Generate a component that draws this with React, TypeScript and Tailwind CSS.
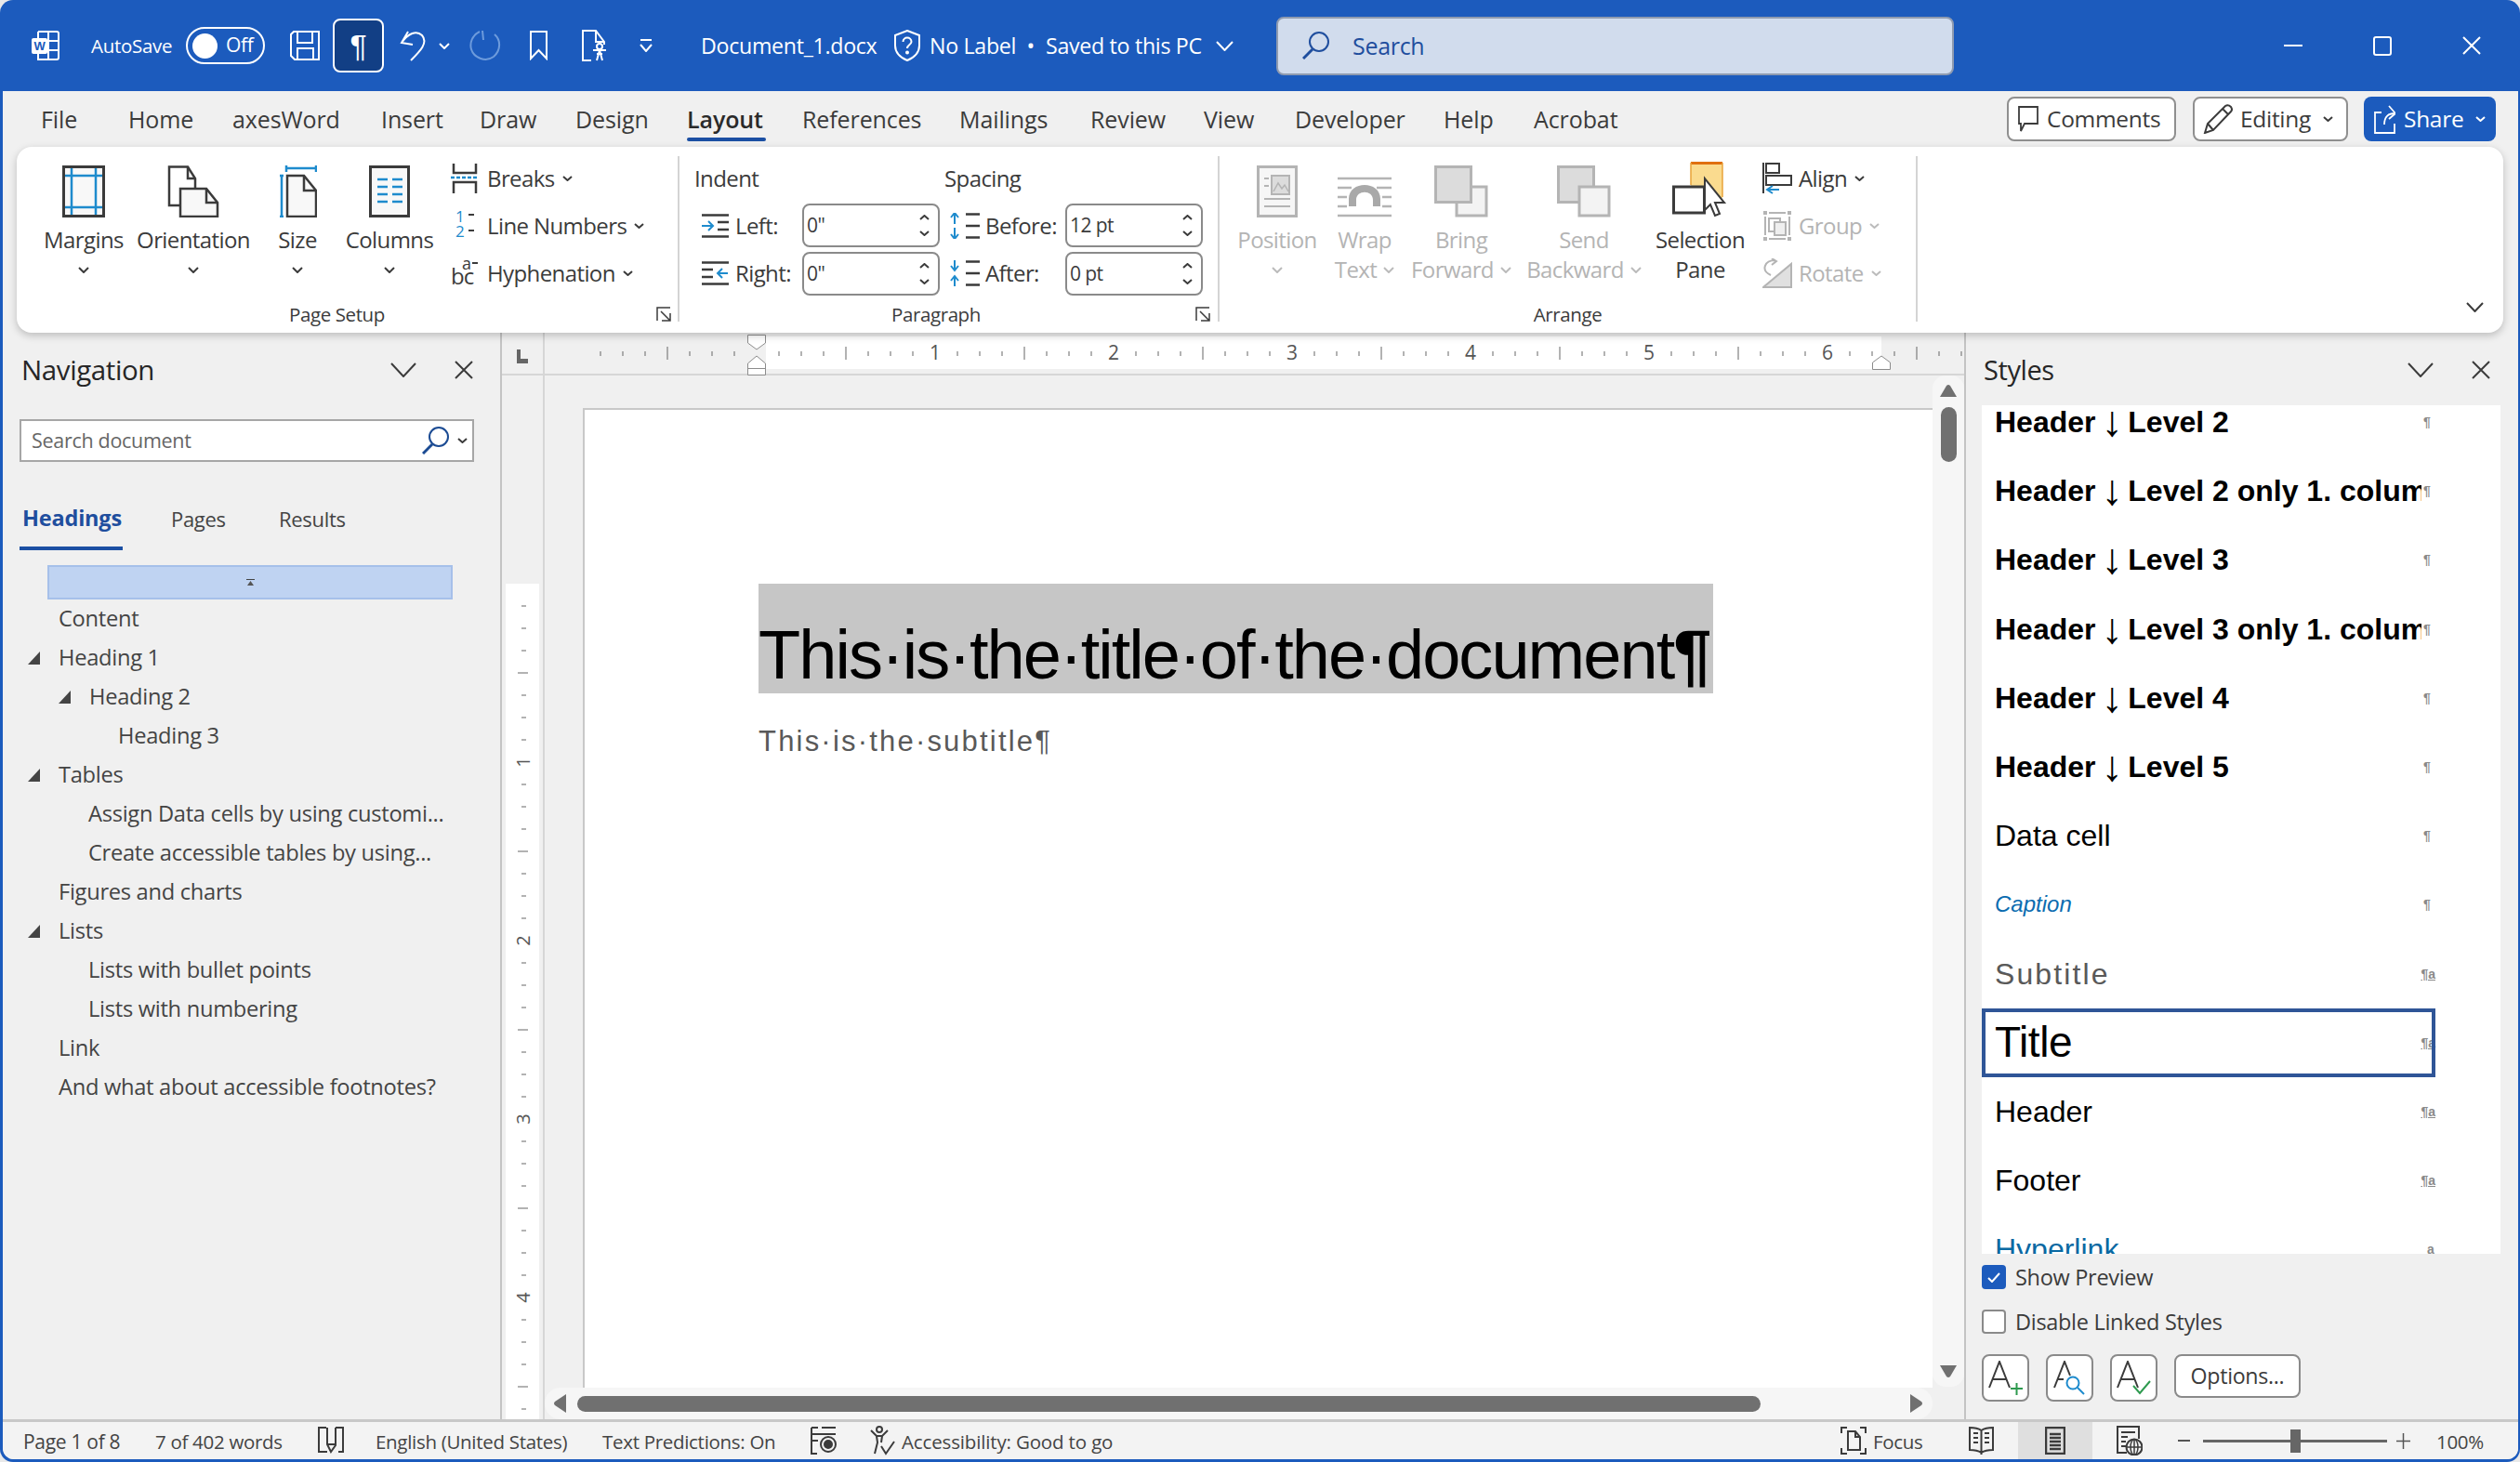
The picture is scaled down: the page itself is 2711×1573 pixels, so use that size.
import React from "react";

const D = "#3b3b3b";
const B = "#1e8bcd";
const G = "#b4b4b4";

type SP = { w: number; h: number; c?: string; sw?: number; children?: React.ReactNode; className?: string };
const Svg = ({ w, h, c = D, sw = 2, children, className = "" }: SP) => (
  <svg width={w} height={h} viewBox={`0 0 ${w} ${h}`} fill="none" stroke={c} strokeWidth={sw} className={`block shrink-0 ${className}`}>
    {children}
  </svg>
);

const Chev = ({ w = 12, h = 7, c = D, sw = 2 }: { w?: number; h?: number; c?: string; sw?: number }) => (
  <Svg w={w} h={h} c={c} sw={sw}><path d={`M1 1 L${w / 2} ${h - 1} L${w - 1} 1`} /></Svg>
);
const Close = ({ s = 20, c = D, sw = 2 }: { s?: number; c?: string; sw?: number }) => (
  <Svg w={s} h={s} c={c} sw={sw}><path d={`M1 1 L${s - 1} ${s - 1} M${s - 1} 1 L1 ${s - 1}`} /></Svg>
);

/* ---------- title bar icons ---------- */
const WordLogo = () => (
  <Svg w={32} h={34} c="#fff" sw={2}>
    <path d="M8 2 H28 Q30 2 30 4 V30 Q30 32 28 32 H8 V26 M8 9 V2 M19 2 V32 M19 12 H30 M19 22 H30" />
    <rect x="1" y="9" width="17" height="17" rx="2" fill="#fff" stroke="none" />
    <text x="9.5" y="22" fontSize="13" fontWeight="700" fill="#1c5bbd" stroke="none" textAnchor="middle" fontFamily="Liberation Sans, sans-serif">W</text>
  </Svg>
);
const SaveIcon = () => (
  <Svg w={32} h={32} c="#fff" sw={2}>
    <path d="M1 4 V27 L5 31 H31 V1 H4 Z M8 1 V13 H24 V1 M8 31 V19 H25 V31" />
  </Svg>
);
const UndoIcon = () => (
  <Svg w={30} h={33} c="#fff" sw={2}>
    <path d="M9 1 L2 13 L14 15 M2 13 C9 3 18 -1 24 5 C31 13 22 22 12 32" />
  </Svg>
);
const RedoIcon = () => (
  <Svg w={34} h={34} c="#6d9bdc" sw={2}>
    <path d="M11 2 C3 6 0 14 2 21 C5 31 18 35 26 29 C34 22 34 11 27 5 M14 1 L15 11" />
  </Svg>
);
const BookmarkIcon = () => (
  <Svg w={19} h={32} c="#fff" sw={2}><path d="M1 1 H18 V30 L9.5 21 L1 30 Z" /></Svg>
);
const AccDocIcon = () => (
  <Svg w={30} h={34} c="#fff" sw={2}>
    <path d="M10 33 H1 V1 H15 L24 13 V16 M15 1 V13 H24" />
    <circle cx="19" cy="18" r="3" />
    <path d="M12 22 H26 M19 22 L16 33 M19 22 L22 33 M16 26 H22" />
  </Svg>
);
const QatDrop = () => (
  <Svg w={14} h={14} c="#fff" sw={2}><path d="M1 1 H13 M1 6 L7 13 L13 6" /></Svg>
);
const ShieldIcon = () => (
  <svg width={28} height={34} viewBox="0 0 28 34" fill="none" stroke="#fff" strokeWidth={2} className="block shrink-0">
    <path d="M14 1 L27 6 V17 C27 25 21 30 14 33 C7 30 1 25 1 17 V6 Z" />
    <path d="M9.5 13 C9.5 7 18.5 7 18.5 13 C18.5 16 14 16 14 20" />
    <circle cx="14" cy="24.5" r="1" fill="#fff" />
  </svg>
);
const SearchGlass = ({ c = "#1f4e9e" }: { c?: string }) => (
  <Svg w={29} h={30} c={c} sw={2}>
    <circle cx="18" cy="11" r="10" />
    <path d="M11 19 L1 29" strokeWidth={3} />
  </Svg>
);

/* ---------- ribbon icons ---------- */
const Fold = ({ x, y, w, h, f = 12 }: { x: number; y: number; w: number; h: number; f?: number }) => (
  <>
    <path d={`M${x} ${y} H${x + w - f} L${x + w} ${y + f + 3} V${y + h} H${x} Z`} fill="#f8f8f8" />
    <path d={`M${x + w - f} ${y} V${y + f + 3} H${x + w}`} />
  </>
);
const MarginsIcon = () => (
  <Svg w={46} h={56} sw={3}>
    <rect x="1.5" y="1.5" width="43" height="53" fill="#f8f8f8" />
    <path d="M3 11 H43 M3 45 H43 M10 3 V53 M36 3 V53" stroke={B} strokeWidth={2.5} />
    <rect x="1.5" y="1.5" width="43" height="53" />
  </Svg>
);
const OrientIcon = () => (
  <Svg w={56} h={56} sw={2.5}>
    <path d="M13 43 H2 V1.5 H22 L30 14 V24" fill="#fff" />
    <path d="M22 1.5 V14 H30" />
    <Fold x={14} y={25} w={40} h={30} f={12} />
  </Svg>
);
const SizeIcon = () => (
  <Svg w={42} h={56}>
    <path d="M9 3 H41 M9 0 V7 M41 0 V7" stroke={B} strokeWidth={2.5} />
    <path d="M2 11 H6 M4 11 V55 M2 55 H6" stroke={B} strokeWidth={2.5} />
    <g strokeWidth={2.5}><Fold x={10} y={11} w={31} h={44} f={13} /></g>
  </Svg>
);
const ColumnsIcon = () => (
  <Svg w={44} h={56} sw={3}>
    <rect x="1.5" y="1.5" width="41" height="53" fill="#f8f8f8" />
    <path d="M9 15 H20 M25 15 H36 M9 23 H20 M25 23 H36 M9 31 H20 M25 31 H36 M9 39 H20 M25 39 H36" stroke={B} strokeWidth={2.5} />
  </Svg>
);
const BreaksIcon = () => (
  <Svg w={30} h={32}>
    <path d="M3 0 V10 H27 V0 M3 32 V20 H27 V32" strokeWidth={2.5} />
    <path d="M0 15 H30" stroke={B} strokeWidth={2.5} strokeDasharray="4 2" />
  </Svg>
);
const LineNumIcon = () => (
  <svg width={30} height={40} viewBox="0 0 30 40" className="block shrink-0">
    <text x="5" y="16" fontSize="17" fill={B} fontFamily="Open Sans, sans-serif">1</text>
    <text x="5" y="32" fontSize="17" fill={B} fontFamily="Open Sans, sans-serif">2</text>
    <path d="M19 8 H25 M19 25 H25" stroke={D} strokeWidth={2} />
  </svg>
);
const HyphIcon = () => (
  <svg width={32} height={40} viewBox="0 0 32 40" className="block shrink-0">
    <text x="12" y="16" fontSize="18" fill={D} fontFamily="Open Sans, sans-serif">a</text>
    <text x="0" y="32" fontSize="24" fill={D} fontFamily="Open Sans, sans-serif" letterSpacing="-1">bc</text>
    <path d="M23 9 H29" stroke={D} strokeWidth={2} />
  </svg>
);
const Launcher = () => (
  <Svg w={16} h={16} sw={1.5}>
    <path d="M1 15 V1 H15 M15 15 L5 5 M6 15 H15 V7" />
  </Svg>
);
const IndentIcon = ({ right = false }: { right?: boolean }) => (
  <Svg w={29} h={26} sw={2.5}>
    <path d="M0 1.5 H29 M0 24.5 H29" />
    {right ? <path d="M0 9 H12 M0 17 H12" /> : <path d="M17 9 H29 M17 17 H29" />}
    {right ? (
      <path d="M28 13 H18 M22 8 L17 13 L22 18" stroke={B} strokeWidth={2} />
    ) : (
      <path d="M0 13 H11 M7 8 L12 13 L7 18" stroke={B} strokeWidth={2} />
    )}
  </Svg>
);
const SpacingIcon = ({ after = false }: { after?: boolean }) => (
  <Svg w={34} h={28} sw={2.5}>
    <path d="M18 1.5 H33 M18 14 H33 M18 26.5 H33" />
    {after ? (
      <path d="M6 0 V10 M2 6 L6 11 L10 6 M6 28 V18 M2 22 L6 17 L10 22" stroke={B} strokeWidth={2} />
    ) : (
      <path d="M6 12 V1 M2 5 L6 0 L10 5 M6 16 V27 M2 23 L6 28 L10 23" stroke={B} strokeWidth={2} />
    )}
  </Svg>
);
const PositionIcon = () => (
  <Svg w={44} h={56} c={G} sw={3}>
    <rect x="1.5" y="1.5" width="41" height="53" fill="#f6f6f6" />
    <rect x="16" y="11" width="19" height="20" fill="#dcdcdc" strokeWidth={2} />
    <path d="M18 28 L23 19 L27 25 L30 21 L34 28" strokeWidth={1.5} />
    <path d="M8 14 H13 M8 22 H13 M8 36 H36 M8 44 H36" strokeWidth={2} />
  </Svg>
);
const WrapIcon = () => (
  <Svg w={58} h={44} c={G} sw={2.5}>
    <path d="M0 2 H58 M0 42 H58 M0 12 H15 M42 12 H58 M0 22 H10 M48 22 H58 M0 32 H10 M48 32 H58" />
    <path d="M12 32 V24 C12 4 46 4 46 24 V32 H38 V25 C38 14 20 14 20 25 V32 Z" fill="#a9a9a9" stroke="none" />
  </Svg>
);
const BringIcon = () => (
  <Svg w={58} h={56} c={G} sw={3}>
    <rect x="24" y="23" width="32" height="31" fill="#f3f3f3" />
    <rect x="1.5" y="1.5" width="38" height="38" fill="#dcdcdc" />
  </Svg>
);
const SendIcon = () => (
  <Svg w={58} h={56} c={G} sw={3}>
    <rect x="1.5" y="1.5" width="38" height="38" fill="#dcdcdc" />
    <rect x="24" y="23" width="32" height="31" fill="#f3f3f3" />
  </Svg>
);
const SelectionIcon = () => (
  <Svg w={60} h={60} sw={3}>
    <rect x="20" y="1" width="34" height="38" fill="#fadb8f" stroke="none" />
    <path d="M20 1.5 H54" stroke="#e07010" strokeWidth={3} />
    <path d="M20 1 V25 M54 1 V38" stroke="#e8a33a" strokeWidth={1.5} />
    <rect x="1.5" y="27" width="33" height="28" fill="#fff" />
    <path d="M35 18 V52 L41 46 L46 58 L51 56 L46 44 L56 44 Z" fill="#fff" strokeWidth={2} />
  </Svg>
);
const AlignIcon = () => (
  <Svg w={32} h={34} sw={2}>
    <path d="M1 0 V33" />
    <rect x="4" y="1" width="14" height="10" />
    <rect x="4" y="14" width="27" height="10" />
    <path d="M18 29 H6 M11 25 L5 29 L11 33" stroke={B} strokeWidth={2} />
  </Svg>
);
const GroupIcon = () => (
  <Svg w={32} h={32} c={G} sw={2}>
    <path d="M1 0 H5 V4 H1 Z M27 0 H31 V4 H27 Z M1 28 H5 V32 H1 Z M27 28 H31 V32 H27 Z" fill={G} stroke="none" />
    <path d="M3 6 V26 M29 6 V26 M7 2 H25 M7 30 H25" strokeWidth={2} />
    <rect x="7" y="8" width="12" height="14" />
    <rect x="13" y="12" width="12" height="14" fill="#efefef" />
  </Svg>
);
const RotateIcon = () => (
  <Svg w={32} h={32} c={G} sw={2}>
    <path d="M1 31 L31 31 L31 6 Z" fill="#e0e0e0" />
    <path d="M14 2 C2 2 -2 13 9 18 M10 0 L15 3 L10 7" />
  </Svg>
);

/* ---------- small shared pieces ---------- */
const Large = ({
  w, icon, l1, l2, disabled = false, chevInline = false,
}: { w: string; icon: React.ReactNode; l1: string; l2?: string; disabled?: boolean; chevInline?: boolean }) => {
  const color = disabled ? "text-[#b4b4b4]" : "text-[#3b3b3b]";
  const cc = disabled ? "#bbbbbb" : D;
  return (
    <div className={`${w} flex flex-col items-center shrink-0 pt-[8px] text-[24px] tracking-[-0.6px] ${color}`}>
      <div className="h-[58px] flex items-end justify-center">{icon}</div>
      <div className="h-[32px] mt-[8px] leading-[32px] whitespace-nowrap">{l1}</div>
      {l2 ? (
        <div className="h-[32px] leading-[32px] whitespace-nowrap flex items-center gap-[7px]">
          {l2}
          {chevInline && <Chev c={cc} />}
        </div>
      ) : (
        <div className="h-[32px] flex items-center"><Chev c={cc} /></div>
      )}
    </div>
  );
};

const Small = ({ icon, label, disabled = false }: { icon: React.ReactNode; label: string; disabled?: boolean }) => (
  <div className={`h-[48px] flex items-center text-[24px] tracking-[-0.6px] whitespace-nowrap ${disabled ? "text-[#b4b4b4]" : "text-[#3b3b3b]"}`}>
    <div className="w-[39px] shrink-0">{icon}</div>
    <span>{label}</span>
    <span className="ml-[8px]"><Chev w={11} h={6} c={disabled ? "#bbbbbb" : D} /></span>
  </div>
);

const Spin = ({ value }: { value: string }) => (
  <div className="w-[148px] h-[47px] shrink-0 rounded-[8px] border-2 border-[#8a8a8a] bg-white flex items-center pl-[3px] pr-[9px] justify-between text-[21px] text-[#3b3b3b]">
    <span>{value}</span>
    <div className="flex flex-col gap-[11px]">
      <div className="rotate-180"><Chev w={11} h={6} /></div>
      <Chev w={11} h={6} />
    </div>
  </div>
);

const Sep = () => <div className="w-[2px] h-[178px] bg-[#d4d4d4] shrink-0" />;

const GroupLabel = ({ children, cls = "" }: { children: React.ReactNode; cls?: string }) => (
  <div className={`h-[40px] flex items-center justify-center text-[20.5px] tracking-[-0.4px] text-[#3b3b3b] ${cls}`}>{children}</div>
);

/* ---------- ruler ---------- */
const HRuler = () => {
  const ticks: React.ReactNode[] = [];
  for (let i = -7; i <= 54; i++) {
    if (i === 0) continue;
    const x = 228 + i * 24;
    if (i % 8 === 0) {
      ticks.push(
        <text key={i} x={x} y={29} fontSize="21" fill="#555" stroke="none" textAnchor="middle" fontFamily="Open Sans, sans-serif">
          {i / 8}
        </text>
      );
    } else if (i % 4 === 0) {
      ticks.push(<path key={i} d={`M${x} 15 V29`} stroke="#666" strokeWidth={1} />);
    } else {
      ticks.push(<path key={i} d={`M${x} 20 V25`} stroke="#666" strokeWidth={1} />);
    }
  }
  return (
    <svg width={1527} height={46} viewBox="0 0 1527 46" className="block shrink-0">
      <rect x="238" y="4" width="1200" height="35" fill="#fff" />
      {ticks}
      <g fill="#fff" stroke="#8c8c8c" strokeWidth={1}>
        <path d="M218.5 2.5 H237.5 V11 L228 18 L218.5 11 Z" />
        <path d="M218.5 45.5 V33 L228 25 L237.5 33 V45.5 Z" />
        <path d="M218.5 38.5 H237.5" />
        <path d="M1428.5 39.5 V32 L1438 25 L1447.5 32 V39.5 Z" />
      </g>
    </svg>
  );
};

const VRuler = () => {
  const ticks: React.ReactNode[] = [];
  for (let i = 1; i <= 37; i++) {
    const y = 224 + i * 24;
    if (i % 8 === 0) {
      ticks.push(
        <text key={i} x={0} y={0} transform={`translate(30 ${y}) rotate(-90)`} fontSize="20" fill="#555" textAnchor="middle" fontFamily="Open Sans, sans-serif">
          {i / 8}
        </text>
      );
    } else if (i % 4 === 0) {
      ticks.push(<path key={i} d={`M17 ${y} H28`} stroke="#666" strokeWidth={1} />);
    } else {
      ticks.push(<path key={i} d={`M21 ${y} H26`} stroke="#666" strokeWidth={1} />);
    }
  }
  return (
    <svg width={45} height={1123} viewBox="0 0 45 1123" className="block shrink-0">
      <rect x="4" y="224" width="36" height="899" fill="#fff" />
      {ticks}
    </svg>
  );
};

/* ---------- data ---------- */
const tabs: [string, string][] = [
  ["File", "w-[94px]"], ["Home", "w-[112px]"], ["axesWord", "w-[160px]"], ["Insert", "w-[106px]"], ["Draw", "w-[103px]"],
  ["Design", "w-[120px]"], ["Layout", "w-[124px]"], ["References", "w-[169px]"], ["Mailings", "w-[141px]"], ["Review", "w-[122px]"],
  ["View", "w-[98px]"], ["Developer", "w-[160px]"], ["Help", "w-[97px]"], ["Acrobat", "w-[120px]"],
];

const navItems: [string, string, boolean][] = [
  ["Content", "pl-[60px]", false],
  ["Heading 1", "pl-[27px]", true],
  ["Heading 2", "pl-[60px]", true],
  ["Heading 3", "pl-[124px]", false],
  ["Tables", "pl-[27px]", true],
  ["Assign Data cells by using customi...", "pl-[92px]", false],
  ["Create accessible tables by using...", "pl-[92px]", false],
  ["Figures and charts", "pl-[60px]", false],
  ["Lists", "pl-[27px]", true],
  ["Lists with bullet points", "pl-[92px]", false],
  ["Lists with numbering", "pl-[92px]", false],
  ["Link", "pl-[60px]", false],
  ["And what about accessible footnotes?", "pl-[60px]", false],
];

const Arrow = () => (
  <span className="inline-flex w-[17px] justify-center font-normal text-[46px] leading-[0] translate-y-[4px]">↓</span>
);

const styleRows: { t: React.ReactNode; cls: string; mark: string; sel?: boolean }[] = [
  { t: <>Header <Arrow /> Level 2</>, cls: "font-bold text-[32px] text-black", mark: "¶" },
  { t: <>Header <Arrow /> Level 2 only 1. column</>, cls: "font-bold text-[32px] text-black", mark: "¶" },
  { t: <>Header <Arrow /> Level 3</>, cls: "font-bold text-[32px] text-black", mark: "¶" },
  { t: <>Header <Arrow /> Level 3 only 1. column</>, cls: "font-bold text-[32px] text-black", mark: "¶" },
  { t: <>Header <Arrow /> Level 4</>, cls: "font-bold text-[32px] text-black", mark: "¶" },
  { t: <>Header <Arrow /> Level 5</>, cls: "font-bold text-[32px] text-black", mark: "¶" },
  { t: "Data cell", cls: "text-[32px] text-black", mark: "¶" },
  { t: "Caption", cls: "italic text-[24px] text-[#0b6cb0]", mark: "¶" },
  { t: "Subtitle", cls: "text-[32px] tracking-[2.1px] text-[#595959]", mark: "¶a" },
  { t: "Title", cls: "text-[46px] tracking-[-0.4px] text-black", mark: "¶a", sel: true },
  { t: "Header", cls: "text-[32px] text-black", mark: "¶a" },
  { t: "Footer", cls: "text-[32px] text-black", mark: "¶a" },
  { t: "Hyperlink", cls: "text-[32px] text-[#0a69a3]", mark: "a" },
];

const Tri = () => (
  <svg width={13} height={14} viewBox="0 0 13 14" className="block"><path d="M13 0 V14 H0 Z" fill="#444" /></svg>
);

const MenuBtn = ({ cls, children }: { cls: string; children: React.ReactNode }) => (
  <div className={`h-[48px] rounded-[8px] flex items-center shrink-0 ${cls}`}>{children}</div>
);

const AIcon = ({ kind }: { kind: "plus" | "find" | "check" }) => (
  <div className="w-[51px] h-[51px] rounded-[8px] border-2 border-[#8a8a8a] bg-white flex items-center justify-center shrink-0">
    <svg width={37} height={38} viewBox="0 0 37 38" fill="none" className="block">
      {kind === "plus" && (
        <>
          <path d="M1 29 L12 1 L23 29 M5 20 H19" stroke={D} strokeWidth={2} />
          <path d="M24 30 H37 M30.5 24 V37" stroke="#2e9a4f" strokeWidth={2} />
        </>
      )}
      {kind === "find" && (
        <>
          <path d="M2 29 L13 1 L19 16 M6 20 H12" stroke={D} strokeWidth={2} />
          <circle cx="22" cy="24" r="6.5" stroke={B} strokeWidth={2} />
          <path d="M27 29 L34 36" stroke={B} strokeWidth={2} />
        </>
      )}
      {kind === "check" && (
        <>
          <path d="M1 29 L12 1 L23 29 M5 20 H19" stroke={D} strokeWidth={2} />
          <path d="M18 27 L25 35 L36 22" stroke="#2e9a4f" strokeWidth={2} />
        </>
      )}
    </svg>
  </div>
);

export default function App() {
  return (
    <div className="w-[2711px] h-[1573px] bg-[#e9e9e9] overflow-hidden font-['Open_Sans',sans-serif]">
      <div className="w-full h-full flex flex-col rounded-[14px] bg-[#1c5bbd] overflow-hidden">
        {/* Title bar */}
        <div className="h-[98px] shrink-0 flex items-center text-white text-[20.5px] tracking-[-0.3px]">
          <div className="ml-[33px]"><WordLogo /></div>
          <span className="ml-[33px] w-[102px] shrink-0">AutoSave</span>
          <div className="w-[85px] h-[40px] rounded-full border-2 border-white flex items-center pl-[5px] shrink-0">
            <div className="w-[27px] h-[27px] rounded-full bg-white" />
            <span className="ml-[9px] text-[21px]">Off</span>
          </div>
          <div className="ml-[27px]"><SaveIcon /></div>
          <div className="ml-[14px] w-[55px] h-[58px] rounded-[8px] border-2 border-white bg-[#123f85] flex items-center justify-center text-[34px] font-['Liberation_Sans',sans-serif]">¶</div>
          <div className="ml-[17px]"><UndoIcon /></div>
          <div className="ml-[12px]"><Chev w={12} h={7} c="#fff" /></div>
          <div className="ml-[21px]"><RedoIcon /></div>
          <div className="ml-[31px]"><BookmarkIcon /></div>
          <div className="ml-[37px]"><AccDocIcon /></div>
          <div className="ml-[32px]"><QatDrop /></div>
          <span className="ml-[52px] w-[208px] shrink-0 text-[23.2px] whitespace-nowrap">Document_1.docx</span>
          <ShieldIcon />
          <span className="ml-[10px] w-[125px] shrink-0 text-[23.2px] whitespace-nowrap">No Label&nbsp;&nbsp;•</span>
          <span className="w-[183px] shrink-0 text-[23.2px] whitespace-nowrap">Saved to this PC</span>
          <Chev w={19} h={11} c="#fff" />
          <div className="ml-[46px] w-[729px] h-[63px] rounded-[8px] border-2 border-[#8f9bb0] bg-[#d1dced] flex items-center pl-[26px] text-[25px] text-[#1f4e9e] shrink-0">
            <SearchGlass />
            <span className="ml-[25px] pt-[2px]">Search</span>
          </div>
          <div className="ml-[355px] w-[20px] h-[2px] bg-white shrink-0" />
          <div className="ml-[76px] w-[20px] h-[21px] rounded-[3px] border-2 border-white shrink-0" />
          <div className="ml-[76px]"><Close s={20} c="#fff" /></div>
        </div>

        {/* Window content */}
        <div className="h-[1472px] ml-[3px] mr-[2px] rounded-b-[12px] overflow-hidden flex flex-col bg-[#f0f0f0] shrink-0">
          {/* Tabs */}
          <div className="h-[60px] shrink-0 flex items-center pl-[41px] text-[25px] tracking-[-0.1px] text-[#3b3b3b]">
            {tabs.map(([t, w]) => (
              <div key={t} className={`${w} shrink-0 h-full relative flex items-center whitespace-nowrap pt-[2px] ${t === "Layout" ? "font-semibold text-[#2a2a2a]" : ""}`}>
                {t}
                {t === "Layout" && <div className="absolute left-0 top-[50px] w-[85px] h-[4px] rounded-full bg-[#1b4fa3]" />}
              </div>
            ))}
            <div className="ml-[389px] flex gap-[18px] text-[24.5px] tracking-[-0.3px]">
              <MenuBtn cls="w-[182px] border-2 border-[#8f8f8f] bg-white pl-[10px] gap-[9px]">
                <Svg w={22} h={28} sw={1.8}><path d="M1 1 H21 V19 H7 L3 27 V19 H1 Z" /></Svg>
                <span>Comments</span>
              </MenuBtn>
              <MenuBtn cls="w-[167px] border-2 border-[#8f8f8f] bg-white pl-[9px]">
                <Svg w={32} h={32} sw={2}><path d="M2 31 L5 21 L24 2 Q27 0 30 3 Q32 6 30 8 L11 28 Z M5 21 L11 28 M21 5 L27 11" /></Svg>
                <span className="ml-[8px]">Editing</span>
                <span className="ml-[13px]"><Chev w={11} h={6} /></span>
              </MenuBtn>
              <MenuBtn cls="w-[142px] bg-[#1c5bbd] text-white pl-[10px] ml-[-1px]">
                <Svg w={24} h={31} c="#fff" sw={1.8}><path d="M9 8 H2 V30 H23 V20 M12 21 C12 12 17 9 23 9 M17 1 L24 9 L17 15" /></Svg>
                <span className="ml-[9px]">Share</span>
                <span className="ml-[13px]"><Chev w={11} h={6} c="#fff" /></span>
              </MenuBtn>
            </div>
          </div>

          {/* Ribbon */}
          <div className="relative z-10 ml-[15px] w-[2675px] h-[200px] shrink-0 rounded-[16px] bg-white shadow-[0_3px_9px_rgba(0,0,0,0.22)] flex pt-[10px]">
            {/* Page Setup */}
            <div className="w-[711px] shrink-0 relative">
              <div className="h-[150px] flex pl-[16px]">
                <Large w="w-[112px]" icon={<MarginsIcon />} l1="Margins" />
                <Large w="w-[124px]" icon={<OrientIcon />} l1="Orientation" />
                <Large w="w-[100px]" icon={<SizeIcon />} l1="Size" />
                <Large w="w-[98px]" icon={<ColumnsIcon />} l1="Columns" />
                <div className="ml-[17px] flex flex-col gap-[4px]">
                  <Small icon={<BreaksIcon />} label="Breaks" />
                  <Small icon={<LineNumIcon />} label="Line Numbers" />
                  <Small icon={<HyphIcon />} label="Hyphenation" />
                </div>
              </div>
              <GroupLabel cls="pr-[22px]">Page Setup</GroupLabel>
              <div className="absolute right-[7px] top-[162px]"><Launcher /></div>
            </div>
            <Sep />
            {/* Paragraph */}
            <div className="w-[579px] shrink-0 relative">
              <div className="h-[150px] flex flex-col gap-[4px] text-[24px] tracking-[-0.6px] text-[#3b3b3b]">
                <div className="h-[48px] flex items-center pl-[16px]">
                  <span className="w-[269px] shrink-0">Indent</span>
                  <span>Spacing</span>
                </div>
                <div className="h-[48px] flex items-center pl-[24px]">
                  <div className="w-[36px] shrink-0"><IndentIcon /></div>
                  <span className="w-[72px] shrink-0">Left:</span>
                  <Spin value={'0"'} />
                  <div className="ml-[10px] w-[39px] shrink-0"><SpacingIcon /></div>
                  <span className="w-[86px] shrink-0">Before:</span>
                  <Spin value="12 pt" />
                </div>
                <div className="h-[48px] flex items-center pl-[24px]">
                  <div className="w-[36px] shrink-0"><IndentIcon right /></div>
                  <span className="w-[72px] shrink-0">Right:</span>
                  <Spin value={'0"'} />
                  <div className="ml-[10px] w-[39px] shrink-0"><SpacingIcon after /></div>
                  <span className="w-[86px] shrink-0">After:</span>
                  <Spin value="0 pt" />
                </div>
              </div>
              <GroupLabel cls="pr-[27px]">Paragraph</GroupLabel>
              <div className="absolute right-[8px] top-[162px]"><Launcher /></div>
            </div>
            <Sep />
            {/* Arrange */}
            <div className="w-[749px] shrink-0">
              <div className="h-[150px] flex pl-[12px]">
                <Large w="w-[100px]" icon={<PositionIcon />} l1="Position" disabled />
                <Large w="w-[88px]" icon={<WrapIcon />} l1="Wrap" l2="Text" disabled chevInline />
                <Large w="w-[120px]" icon={<BringIcon />} l1="Bring" l2="Forward" disabled chevInline />
                <Large w="w-[144px]" icon={<SendIcon />} l1="Send" l2="Backward" disabled chevInline />
                <Large w="w-[106px]" icon={<SelectionIcon />} l1="Selection" l2="Pane" />
                <div className="ml-[14px] flex flex-col gap-[4px]">
                  <Small icon={<AlignIcon />} label="Align" />
                  <Small icon={<GroupIcon />} label="Group" disabled />
                  <Small icon={<RotateIcon />} label="Rotate" disabled />
                </div>
              </div>
              <GroupLabel>Arrange</GroupLabel>
            </div>
            <Sep />
            <div className="flex-1 relative">
              <div className="absolute right-[21px] top-[157px]"><Chev w={19} h={11} /></div>
            </div>
          </div>

          {/* Panes */}
          <div className="h-[1169px] shrink-0 flex">
            {/* Navigation */}
            <div className="w-[537px] shrink-0 border-r-2 border-[#c4c4c4] flex flex-col text-[23.7px] tracking-[-0.3px] text-[#444]">
              <div className="h-[80px] shrink-0 flex items-center pl-[20px] pr-[29px]">
                <span className="text-[29.5px] tracking-[-0.4px] font-medium text-[#262626]">Navigation</span>
                <div className="ml-auto"><Chev w={28} h={16} /></div>
                <div className="ml-[41px]"><Close s={20} /></div>
              </div>
              <div className="ml-[18px] w-[489px] h-[46px] mt-[13px] shrink-0 border-2 border-[#a6a6a6] bg-white flex items-center pl-[11px] pr-[5px] text-[#666] text-[21.5px]">
                <span>Search document</span>
                <div className="ml-auto"><SearchGlass c="#1b4b93" /></div>
                <div className="ml-[9px]"><Chev w={11} h={6} /></div>
              </div>
              <div className="h-[95px] shrink-0 flex ml-[18px] relative items-end pb-[17px] text-[22px]">
                <span className="w-[163px] font-bold text-[#1f4e9e] pl-[3px] text-[23.5px] tracking-[-0.2px]">Headings</span>
                <span className="w-[116px]">Pages</span>
                <span>Results</span>
                <div className="absolute left-0 bottom-0 w-[111px] h-[4px] bg-[#1b4fa3]" />
              </div>
              <div className="ml-[48px] mt-[16px] w-[436px] h-[37px] shrink-0 bg-[#bfd3f2] border-2 border-[#a6c0ea] flex items-center justify-center">
                <Svg w={9} h={8} c="#444" sw={1}><path d="M0 .5 H9" /><path d="M4.5 2 L8 7 H1 Z" fill="#555" stroke="none" /></Svg>
              </div>
              {navItems.map(([t, ind, tri]) => (
                <div key={t} className={`h-[42px] shrink-0 flex items-center whitespace-nowrap ${ind}`}>
                  {tri && <div className="w-[33px] shrink-0"><Tri /></div>}
                  {t}
                </div>
              ))}
            </div>

            {/* Document area */}
            <div className="w-[1573px] shrink-0 flex flex-col">
              <div className="h-[46px] shrink-0 flex border-b-2 border-[#d6d6d6]">
                <div className="w-[46px] shrink-0 border-r-2 border-[#d6d6d6] flex pl-[16px] pt-[18px]">
                  <div className="w-[12px] h-[15px] border-l-[4px] border-b-[5px] border-[#666]" />
                </div>
                <HRuler />
              </div>
              <div className="flex-1 flex min-h-0">
                <div className="w-[46px] shrink-0 border-r-2 border-[#d6d6d6]"><VRuler /></div>
                <div className="w-[1493px] shrink-0 flex flex-col">
                  <div className="flex-1 pl-[41px] pt-[35px] min-h-0">
                    <div className="w-[1452px] h-full bg-white border-t-2 border-l-2 border-[#c8c8c8] pl-[187px] pt-[187px] font-['Liberation_Sans',sans-serif]">
                      <div className="w-[1027px] h-[118px] bg-[#c6c6c6] text-[74px] leading-[118px] pt-[18px] text-black tracking-[-1.95px] whitespace-nowrap">
                        This·is·the·title·of·the·document<span className="font-bold tracking-normal">¶</span>
                      </div>
                      <div className="mt-[32px] text-[31px] leading-[40px] text-[#595959] tracking-[2.2px] whitespace-nowrap">
                        This·is·the·subtitle¶
                      </div>
                    </div>
                  </div>
                  <div className="h-[34px] shrink-0 rounded-full bg-[#f6f6f6] flex items-center pl-[10px] pr-[10px] relative">
                    <svg width={14} height={20} viewBox="0 0 14 20" className="block shrink-0"><path d="M13 0 V20 L1 12 Q-1 10 1 8 Z" fill="#707070" /></svg>
                    <div className="ml-[11px] w-[1273px] h-[17px] rounded-full bg-[#707070] shrink-0" />
                    <svg width={14} height={20} viewBox="0 0 14 20" className="block shrink-0 ml-[160px]"><path d="M1 0 V20 L13 12 Q15 10 13 8 Z" fill="#707070" /></svg>
                  </div>
                </div>
                <div className="w-[34px] shrink-0 h-[1088px] rounded-[14px] bg-[#f6f6f6] flex flex-col items-center pt-[10px]">
                  <svg width={18} height={13} viewBox="0 0 18 13" className="block"><path d="M0 13 L7 1 Q9 -1 11 1 L18 13 Z" fill="#707070" /></svg>
                  <div className="mt-[11px] w-[17px] h-[59px] rounded-full bg-[#707070]" />
                  <svg width={18} height={13} viewBox="0 0 18 13" className="block mt-auto mb-[10px]"><path d="M0 0 L7 12 Q9 14 11 12 L18 0 Z" fill="#707070" /></svg>
                </div>
              </div>
            </div>

            {/* Styles */}
            <div className="flex-1 border-l-2 border-[#c4c4c4] flex flex-col min-w-0">
              <div className="h-[78px] shrink-0 flex items-center pl-[19px] pr-[30px] pt-[2px]">
                <span className="text-[29px] tracking-[-0.4px] text-[#262626]">Styles</span>
                <div className="ml-auto"><Chev w={28} h={16} /></div>
                <div className="ml-[41px]"><Close s={20} /></div>
              </div>
              <div className="ml-[17px] w-[558px] h-[913px] bg-white shrink-0 overflow-hidden">
                <div className="mt-[-19px] font-['Liberation_Sans',sans-serif]">
                  {styleRows.map((r, i) => (
                    <div key={i} className={`w-[488px] h-[74.2px] flex items-center relative ${r.sel ? "outline-[4px] outline-[#2f5597] -outline-offset-[4px]" : ""}`}>
                      <div className={`ml-[14px] w-[459px] whitespace-nowrap overflow-hidden ${r.cls}`}>{r.t}</div>
                      <span className={`text-[14px] font-bold text-[#8a8a8a] leading-none ${r.mark === "¶a" ? "underline" : ""} ${r.mark === "a" ? "ml-[6px]" : ""} ${r.mark === "¶" ? "ml-[2px]" : ""}`}>{r.mark}</span>
                    </div>
                  ))}
                </div>
              </div>
              <div className="ml-[17px] mt-[12px] flex flex-col gap-[22px] text-[23.5px] tracking-[-0.3px] text-[#3b3b3b]">
                <div className="flex items-center h-[26px] gap-[10px]">
                  <div className="w-[26px] h-[26px] rounded-[4px] bg-[#1c5bbd] flex items-center justify-center">
                    <Svg w={14} h={11} c="#fff" sw={2}><path d="M1 6 L5 10 L13 1" /></Svg>
                  </div>
                  <span className="pt-[2px]">Show Preview</span>
                </div>
                <div className="flex items-center h-[26px] gap-[10px]">
                  <div className="w-[26px] h-[26px] rounded-[4px] border-2 border-[#8a8a8a] bg-white" />
                  <span className="pt-[2px]">Disable Linked Styles</span>
                </div>
              </div>
              <div className="ml-[17px] mt-[22px] flex gap-[18px] items-start">
                <AIcon kind="plus" />
                <AIcon kind="find" />
                <AIcon kind="check" />
                <div className="w-[136px] h-[47px] rounded-[8px] border-2 border-[#8a8a8a] bg-white flex items-center justify-center text-[23.2px] tracking-[-0.3px] text-[#3b3b3b] shrink-0">Options...</div>
              </div>
            </div>
          </div>

          {/* Status bar */}
          <div className="h-[43px] shrink-0 border-t-[3px] border-[#c8c8c8] bg-[#f3f3f3] flex items-center text-[20.5px] tracking-[-0.3px] text-[#444] whitespace-nowrap">
            <span className="ml-[22px] w-[142px] shrink-0 pt-[3px] text-[21px]">Page 1 of 8</span>
            <span className="w-[175px] shrink-0 pt-[3px]">7 of 402 words</span>
            <Svg w={28} h={30} sw={2}><path d="M9 1 H1 V27 H10 M19 1 H27 V27 H22 M10 1 V19 L14 27 L19 20 V1 M10 19 H18" /></Svg>
            <span className="ml-[34px] w-[244px] shrink-0 pt-[3px]">English (United States)</span>
            <span className="w-[224px] shrink-0 pt-[3px]">Text Predictions: On</span>
            <Svg w={28} h={30} sw={2}><path d="M12 1 H27 M1 1 V29 H7 M1 1 H8 M1 8 H27 M1 15 H8" /><circle cx="19" cy="19" r="8" /><circle cx="19" cy="19" r="4" fill={D} /></Svg>
            <span className="ml-[35px]">
              <Svg w={28} h={32} sw={2}><circle cx="11" cy="4" r="3" /><path d="M2 5 L8 11 H14 L20 5 M8 11 L9 18 L6 30 M14 11 L13 18 M13 22 L18 30 L27 17" /></Svg>
            </span>
            <span className="ml-[7px] pt-[3px] tracking-[-0.15px]">Accessibility: Good to go</span>
            <div className="ml-auto flex items-center">
              <Svg w={28} h={30} sw={2}><path d="M1 7 V1 H7 M21 1 H27 V7 M1 23 V29 H7 M21 29 H27 V23" /><path d="M8 5 H16 L21 11 V25 H8 Z M16 5 V11 H21" /></Svg>
              <span className="ml-[7px] w-[103px] pt-[3px]">Focus</span>
              <Svg w={27} h={32} sw={2}><path d="M13.5 5 C9 2 5 2 1 2 V26 C5 26 9 26 13.5 29 C18 26 22 26 26 26 V2 C22 2 18 2 13.5 5 Z M13.5 5 V31 M5 8 H10 M5 13 H10 M5 18 H10 M17 8 H22 M17 13 H22 M17 18 H22" /></Svg>
              <div className="ml-[26px] w-[80px] h-[40px] bg-[#dfdfdf] flex items-center justify-center">
                <Svg w={22} h={30} sw={2.5}><rect x="1" y="1" width="20" height="28" /><path d="M5 8 H17 M5 12 H17 M5 16 H17 M5 20 H17 M5 24 H17" /></Svg>
              </div>
              <div className="ml-[26px]">
                <Svg w={28} h={32} sw={2}><path d="M11 29 H1 V1 H24 V14 M5 7 H20 M5 12 H12 M5 17 H10 M5 22 H10" /><circle cx="19" cy="23" r="8.5" /><path d="M10 23 H28 M19 14 V32" strokeWidth={1.5} /><ellipse cx="19" cy="23" rx="4" ry="8.5" strokeWidth={1.5} /></Svg>
              </div>
              <div className="ml-[38px] w-[13px] h-[2px] bg-[#555]" />
              <div className="ml-[14px] w-[198px] h-[3px] bg-[#666] relative">
                <div className="absolute left-[94px] top-[-11px] w-[11px] h-[25px] bg-[#666]" />
              </div>
              <div className="ml-[10px]">
                <Svg w={15} h={17} c="#555" sw={1.5}><path d="M0 8.5 H15 M7.5 0 V17" /></Svg>
              </div>
              <span className="ml-[28px] w-[88px] pt-[3px]">100%</span>
            </div>
          </div>
        </div>
      </div>
    </div>
  );
}
